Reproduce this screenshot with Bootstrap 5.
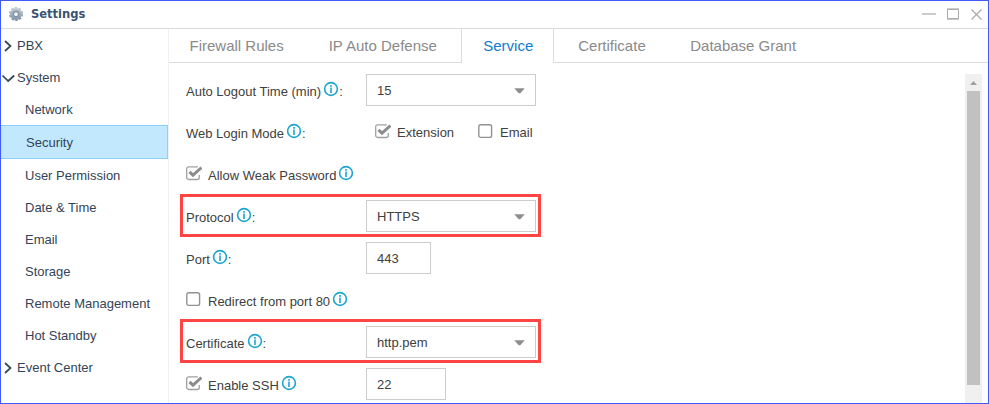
<!DOCTYPE html>
<html lang="en">
<head>
<meta charset="utf-8">
<title>Settings</title>
<link href="https://cdn.jsdelivr.net/npm/bootstrap@5.3.0/dist/css/bootstrap.min.css" rel="stylesheet">
<style>
body{font:13px/20px "Liberation Sans",Arial,sans-serif;color:#404040;background:#fff}
svg{display:block;flex:none}
.window{height:404px;border:1px solid #405af5}
.titlebar{height:28px;flex:none;border-bottom:1px solid #dcdcdc;padding:0 6px 2px 7px}
.title-text{font:bold 12.8px/25px "DejaVu Sans Condensed","DejaVu Sans",sans-serif;color:#3a5370;margin-left:7px}
.side{width:168px;flex:none;border-right:1px solid #f0f0f2;color:#344458}
.side .nav-link{height:32px;padding:2px 0 0 24px;color:inherit;display:flex;align-items:center}
.side .nav-link.top{padding-left:0}
.side .nav-link svg{width:16px}
.side .nav-link.active{height:34px;background:#c2e8fe;border:1px solid #8bd0fb;border-left:0;padding-left:25px;width:167px}
.tabs{height:34px;font-size:15px;border-bottom:1px solid #dcdcdc;flex-wrap:nowrap}
.tabs .nav-link{height:34px;padding:0 22.5px;color:#8a8a8a;line-height:34px;border:0}
.tabs .nav-link:first-child{padding-left:20.5px}
.tabs .nav-link:nth-child(2){width:155px;padding-right:0}
.tabs .nav-link.active{color:#0e7ccc;background:#fff;border:1px solid #dcdcdc;border-width:0 1px;padding:0 21px;width:93px;margin-right:1px}
.tabs .nav-link.active + .nav-link{padding-left:23px;padding-right:22px}
.settings-form{padding:6px 0 0 11px;width:372px}
.line{height:42px;padding:0 5px 0 6px;display:flex;align-items:center}
.line.marked{position:relative}
.line.marked::after{content:"";position:absolute;left:0;top:-1px;width:361px;height:43px;border:3px solid #ff4444}
.line.marked.tall::after{top:-2px;height:44px}
.caption{width:180px;display:flex;flex:none;align-items:center;white-space:nowrap;padding-top:4px}
.caption .info{margin:-7px 0 0 2px}
.caption .tick{margin:-6px 6px 0 0}
.opt{display:flex;align-items:center;padding-top:2px}
.opt .tick{margin:-4px 6px 0 0}
.opt.lead-opt{padding-left:9px}
.field{height:32px;border:1px solid #ccc;width:170px;padding:1px 10px 0 10px;display:flex;align-items:center;justify-content:space-between;background:#fff}
.w-port{width:65px}.w-ssh{width:80px}
.scroller{width:17px;background:#f0f0f0;margin:11px 6px 0 0;padding:6px 2px 0}
.thumb{height:294px;margin-top:6px;background:#c1c1c1}
</style>
<script src="https://cdn.jsdelivr.net/npm/bootstrap@5.3.0/dist/js/bootstrap.bundle.min.js"></script>
</head>
<body>
<svg width="0" height="0" class="position-absolute">
<defs>
<linearGradient id="steel" x1="0" y1="0" x2="0" y2="1"><stop offset="0" stop-color="#c3ccd3"/><stop offset="1" stop-color="#8093a5"/></linearGradient>
<symbol id="info" viewBox="0 0 16 16"><circle cx="8" cy="8" r="6.400" fill="none" stroke="#1ca5cf" stroke-width="1.600"/><path d="M8 4v1.700M8 6.500v5.500" stroke="#1ca5cf" stroke-width="1.600"/></symbol>
<symbol id="box" viewBox="0 0 16 16"><rect x=".8" y="1.800" width="12.800" height="12.600" rx="2" fill="#fff" stroke="#929292" stroke-width="1.400"/></symbol>
<symbol id="checked" viewBox="0 0 16 16"><path d="M13.300 10v2.500a2 2 0 0 1-2 2H2.700a2 2 0 0 1-2-2V3.800a2 2 0 0 1 2-2H11.800" fill="none" stroke="#a0a0a0" stroke-width="1.300"/><path d="M3.500 6.800 7 10.200 15.500 2.500" fill="none" stroke="#8c8c8c" stroke-width="3"/></symbol>
<symbol id="down" viewBox="0 0 11 6"><path d="M.3.300h10.400L6.800 4.700Q5.500 6 4.200 4.700z" fill="#8e8e8e"/></symbol>
</defs>
</svg>
<div class="window d-flex flex-column overflow-hidden">
  <header class="titlebar d-flex align-items-center">
    <svg width="16" height="16" viewBox="0 0 16 16"><circle cx="8" cy="8" r="6" fill="url(#steel)"/><circle cx="8" cy="8" r="6.300" fill="none" stroke="url(#steel)" stroke-width="1.600" stroke-dasharray="2.500 1.458"/><circle cx="8" cy="8" r="3.300" fill="#8295a6"/><circle cx="8" cy="8.200" r="1.900" fill="#eef3f6"/></svg>
    <span class="title-text">Settings</span>
    <svg class="ms-auto" width="62" height="16" viewBox="0 0 62 16"><path d="M2 8h14" stroke="#ccc" stroke-width="2"/><path d="M27.500 3.500h11v9h-11z" fill="none" stroke="#aaa"/><path d="M27 2.500h12M27 13.500h12" stroke="#ccc"/><path d="m51.500 3.500 10 10m0-10-10 10" stroke="#aaa" stroke-width="1.200"/></svg>
  </header>
  <div class="d-flex flex-grow-1">
    <nav class="side nav flex-column">
      <a class="nav-link top"><svg height="16" viewBox="0 0 16 16"><path d="m4 3 5.500 5L4 13" fill="none" stroke="#344458" stroke-width="1.700"/></svg>PBX</a>
      <a class="nav-link top"><svg height="16" viewBox="0 0 16 16"><path d="m1.500 5.500 5.700 5.500 6-5.500" fill="none" stroke="#344458" stroke-width="1.700"/></svg>System</a>
      <a class="nav-link">Network</a>
      <a class="nav-link active">Security</a>
      <a class="nav-link">User Permission</a>
      <a class="nav-link">Date &amp; Time</a>
      <a class="nav-link">Email</a>
      <a class="nav-link">Storage</a>
      <a class="nav-link">Remote Management</a>
      <a class="nav-link">Hot Standby</a>
      <a class="nav-link top"><svg height="16" viewBox="0 0 16 16"><path d="m4 3 5.500 5L4 13" fill="none" stroke="#344458" stroke-width="1.700"/></svg>Event Center</a>
    </nav>
    <main class="flex-grow-1 d-flex flex-column">
      <nav class="nav tabs">
        <a class="nav-link">Firewall Rules</a>
        <a class="nav-link">IP Auto Defense</a>
        <a class="nav-link active">Service</a>
        <a class="nav-link">Certificate</a>
        <a class="nav-link">Database Grant</a>
      </nav>
      <div class="d-flex flex-grow-1 justify-content-between">
        <form class="settings-form">
          <div class="line"><div class="caption">Auto Logout Time (min)<svg class="info" width="16" height="16"><use href="#info"/></svg>:</div><div class="field">15<svg width="11" height="6"><use href="#down"/></svg></div></div>
          <div class="line"><div class="caption">Web Login Mode<svg class="info" width="16" height="16"><use href="#info"/></svg>:</div>
            <div class="opt lead-opt"><svg class="tick" width="16" height="16"><use href="#checked"/></svg>Extension</div>
            <div class="opt ms-4"><svg class="tick" width="16" height="16"><use href="#box"/></svg>Email</div></div>
          <div class="line"><div class="caption"><svg class="tick" width="16" height="16"><use href="#checked"/></svg>Allow Weak Password<svg class="info" width="16" height="16"><use href="#info"/></svg></div></div>
          <div class="line marked"><div class="caption">Protocol<svg class="info" width="16" height="16"><use href="#info"/></svg>:</div><div class="field">HTTPS<svg width="11" height="6"><use href="#down"/></svg></div></div>
          <div class="line"><div class="caption">Port<svg class="info" width="16" height="16"><use href="#info"/></svg>:</div><div class="field w-port">443</div></div>
          <div class="line"><div class="caption"><svg class="tick" width="16" height="16"><use href="#box"/></svg>Redirect from port 80<svg class="info" width="16" height="16"><use href="#info"/></svg></div></div>
          <div class="line marked tall"><div class="caption">Certificate<svg class="info" width="16" height="16"><use href="#info"/></svg>:</div><div class="field">http.pem<svg width="11" height="6"><use href="#down"/></svg></div></div>
          <div class="line"><div class="caption"><svg class="tick" width="16" height="16"><use href="#checked"/></svg>Enable SSH<svg class="info" width="16" height="16"><use href="#info"/></svg></div><div class="field w-ssh">22</div></div>
        </form>
        <div class="scroller"><svg width="13" height="5" viewBox="0 0 13 5"><path d="M3 5h7L6.500 1z" fill="#a0a0a0"/></svg><div class="thumb"></div></div>
      </div>
    </main>
  </div>
</div>
</body>
</html>
